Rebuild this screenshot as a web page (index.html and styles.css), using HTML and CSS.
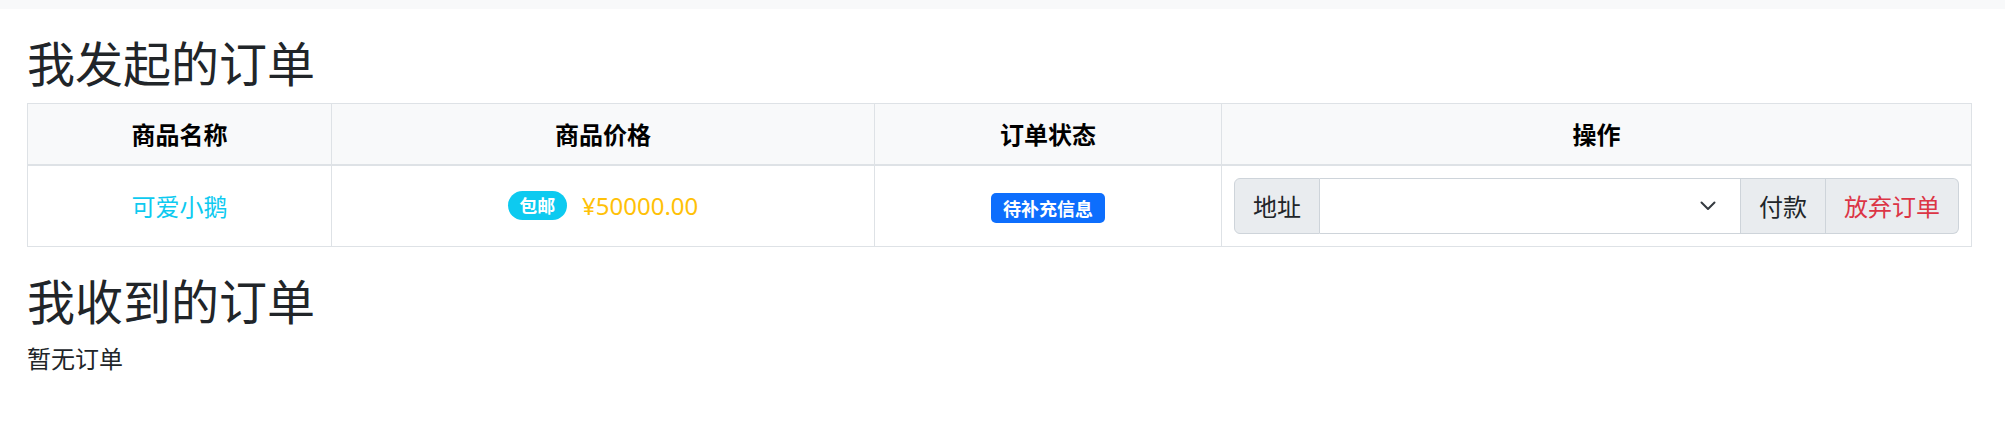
FILE: index.html
```html
<!DOCTYPE html>
<html lang="zh-CN">
<head>
<meta charset="utf-8">
<title>订单</title>
<link rel="stylesheet" href="styles.css">
</head>
<body>
<div class="topbar"></div>
<main class="container">
  <h2 class="title">我发起的订单</h2>
  <table class="orders">
    <colgroup>
      <col class="c1"><col class="c2"><col class="c3"><col class="c4">
    </colgroup>
    <thead>
      <tr><th>商品名称</th><th>商品价格</th><th>订单状态</th><th>操作</th></tr>
    </thead>
    <tbody>
      <tr>
        <td class="name">可爱小鹅</td>
        <td><span class="pill">包邮</span><span class="price">¥50000.00</span></td>
        <td><span class="status">待补充信息</span></td>
        <td>
          <div class="igroup">
            <span class="addon">地址</span>
            <div class="select">
              <svg width="16" height="10" viewBox="0 0 16 10"><polyline points="1.5,1.5 8,8 14.5,1.5" fill="none" stroke="#343a40" stroke-width="2" stroke-linecap="round" stroke-linejoin="round"/></svg>
            </div>
            <button class="btn">付款</button>
            <button class="btn danger">放弃订单</button>
          </div>
        </td>
      </tr>
    </tbody>
  </table>
  <h2 class="title">我收到的订单</h2>
  <p class="empty">暂无订单</p>
</main>
</body>
</html>
```
FILE: styles.css
```css
* { box-sizing: border-box; }
html, body { margin: 0; padding: 0; background: #fff; }
body {
  font-family: "Noto Sans CJK SC", "Microsoft YaHei", sans-serif;
  font-size: 24px;
  line-height: 1.5;
  color: #212529;
}
.topbar { height: 9px; background: #f8f9fa; }
.container { padding: 24px 34px 0 27px; }
.title {
  font-size: 48px;
  font-weight: 400;
  line-height: 1.2;
  margin: 0 0 12px;
}
.orders {
  width: 100%;
  border-collapse: collapse;
  table-layout: fixed;
  margin-bottom: 24px;
}
.c1 { width: 304px; }
.c2 { width: 543px; }
.c3 { width: 347px; }
.c4 { width: 750px; }
.orders th, .orders td {
  border: 1px solid #dee2e6;
  padding: 12px;
  text-align: center;
  vertical-align: middle;
}
.orders th {
  background: #f8f9fa;
  font-weight: 700;
  color: #000;
  border-bottom-width: 2px;
}
.orders td.name { color: #0dcaf0; }
.pill {
  display: inline-block;
  background: #0dcaf0;
  color: #fff;
  font-size: 18px;
  font-weight: 700;
  line-height: 1;
  padding: 5px 11.7px 6px;
  border-radius: 15px;
  margin-right: 15px;
  vertical-align: 2px;
}
.price {
  color: #ffc107;
  font-family: "Noto Sans", "Noto Sans CJK SC", sans-serif;
}
.status {
  display: inline-block;
  background: #0d6efd;
  color: #fff;
  font-size: 18px;
  font-weight: 700;
  line-height: 1;
  padding: 6px 11.7px;
  border-radius: 5px;
}
.igroup {
  display: flex;
  height: 56px;
  text-align: left;
}
.addon, .btn {
  display: flex;
  align-items: center;
  background: #e9ecef;
  border: 1px solid #ced4da;
  padding: 0 18px;
  font-family: inherit;
  font-size: 24px;
  color: #212529;
  line-height: 1.5;
  margin: 0;
}
.addon { border-radius: 6px 0 0 6px; }
.select {
  flex: 1;
  display: flex;
  align-items: center;
  justify-content: flex-end;
  padding-right: 24px;
  border-top: 1px solid #ced4da;
  border-bottom: 1px solid #ced4da;
  background: #fff;
}
.btn + .btn { border-left: none; }
.btn.danger { color: #dc3545; border-radius: 0 6px 6px 0; }
.empty { margin: 0 0 24px; }
```
